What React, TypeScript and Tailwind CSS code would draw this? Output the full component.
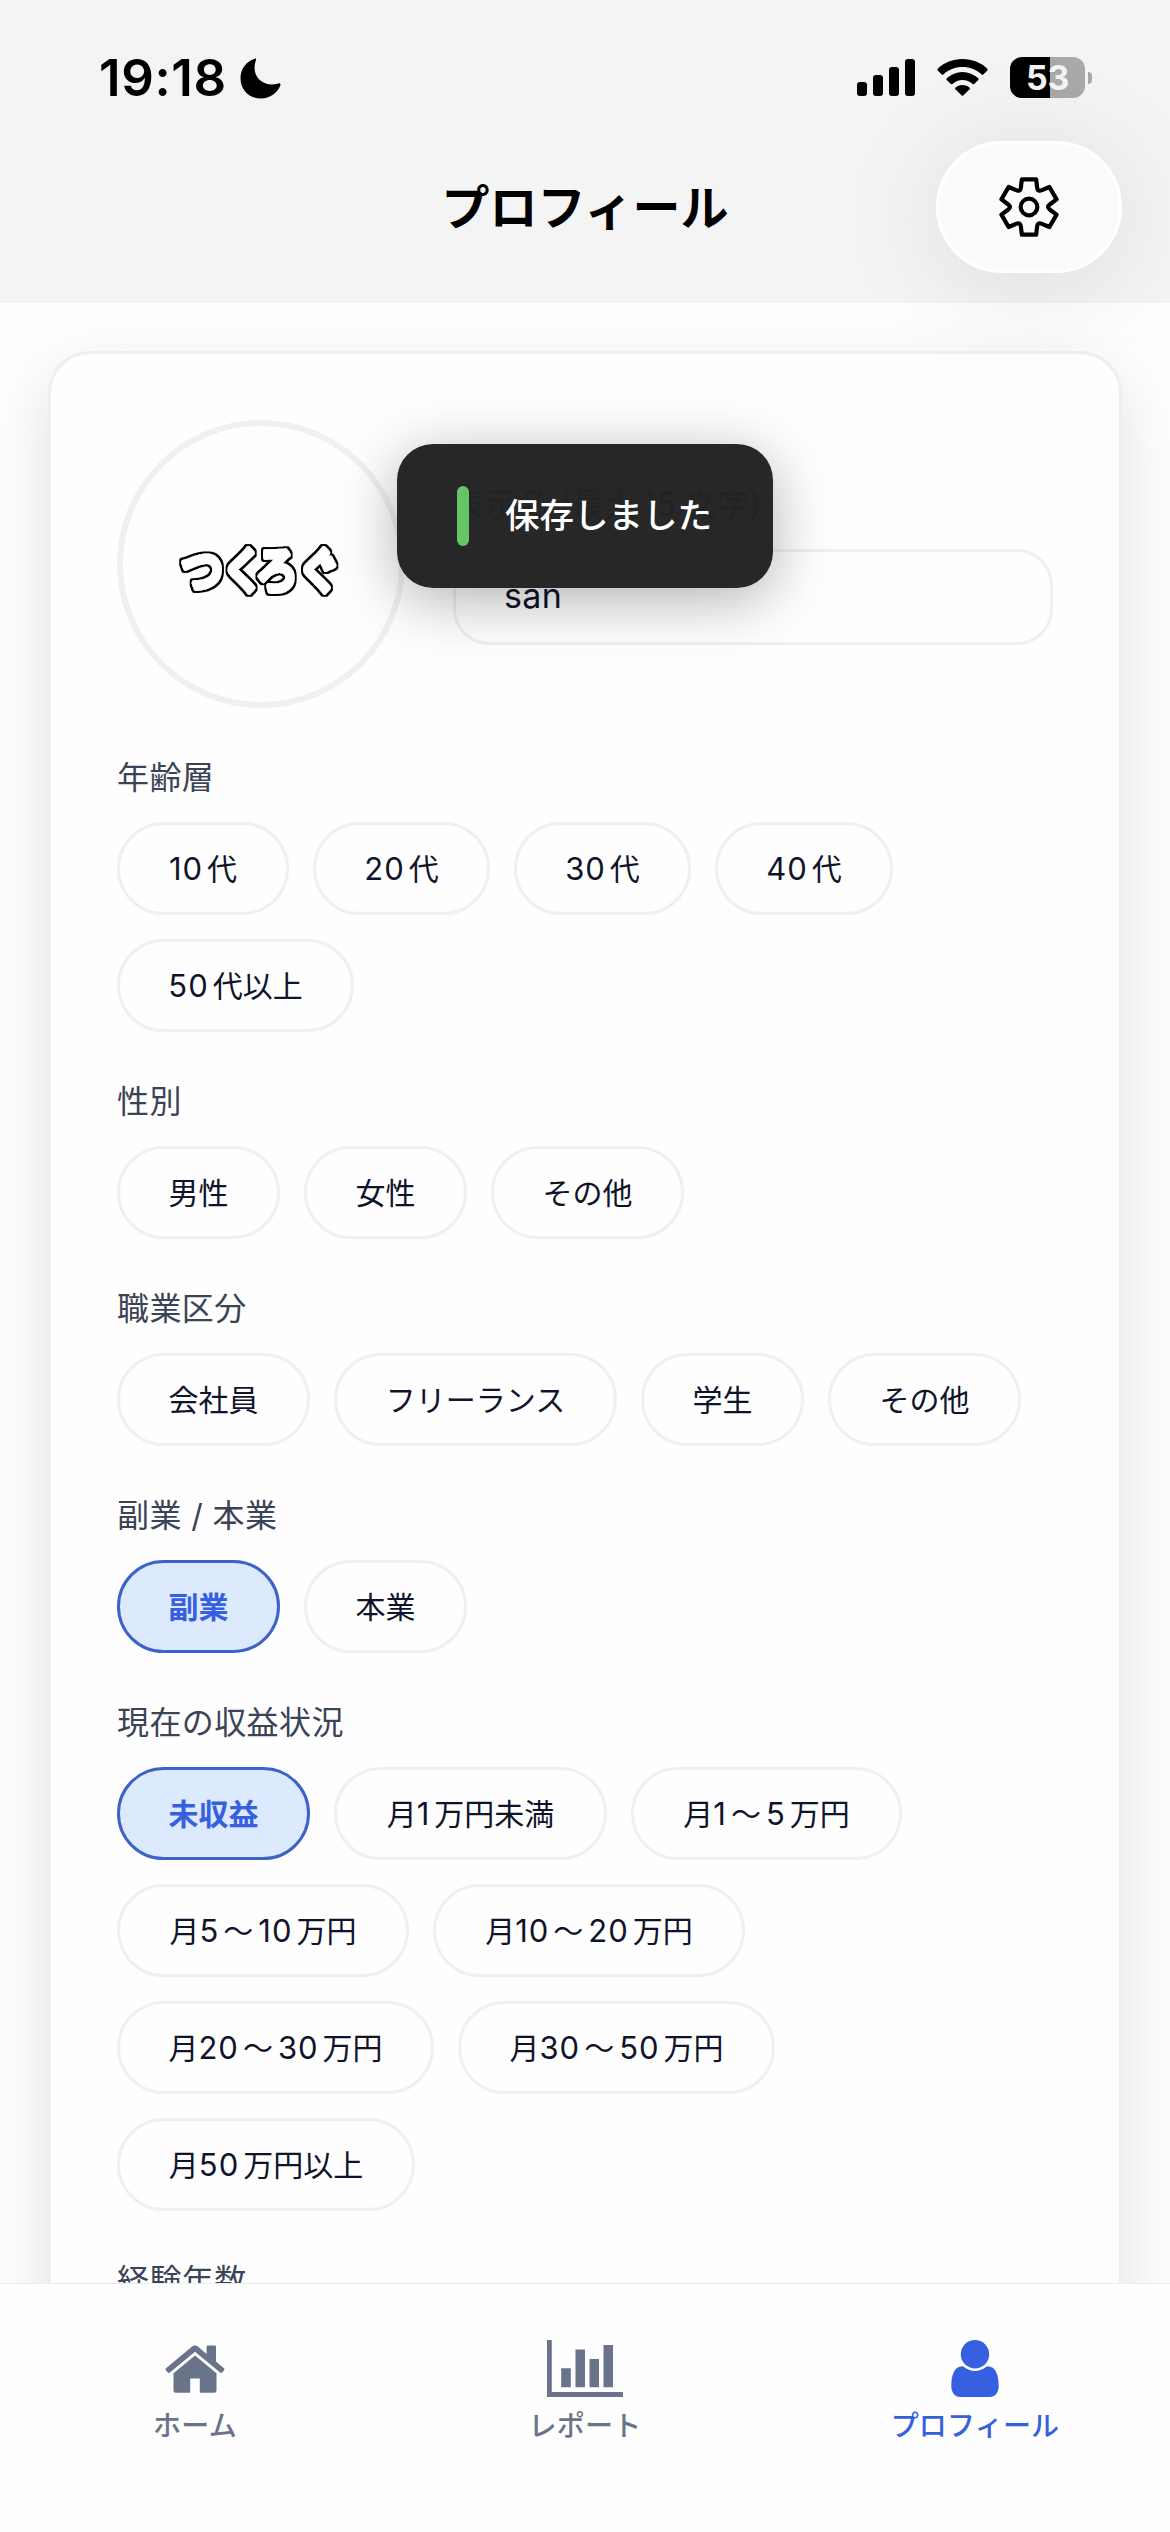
import React from "react";

type Option = { text: string; width: string; selected?: boolean };

function Mixed({ text }: { text: string }) {
  const parts = text.split(/(\d+)/).filter(Boolean);
  return (
    <span className="flex items-center whitespace-nowrap">
      {parts.map((p, i) =>
        /\d/.test(p) ? (
          <span key={i} className={`mr-1 text-[31px] tracking-[1px] ${parts[i - 1] === "〜" ? "ml-[5px]" : ""}`}>
            {p}
          </span>
        ) : (
          <span key={i}>{p}</span>
        ),
      )}
    </span>
  );
}

function Pill({ o }: { o: Option }) {
  return (
    <button
      className={`flex h-[93px] shrink-0 items-center justify-center rounded-full border-[3px] text-[30px] leading-none ${o.width} ${
        o.selected
          ? "border-[#3d63c9] bg-[#dde9fd] font-bold text-[#3660e0]"
          : "border-[#f0f0f1] text-[#10142a]"
      }`}
    >
      <Mixed text={o.text} />
    </button>
  );
}

function Section({ title, rows }: { title: string; rows: Option[][] }) {
  return (
    <section className="flex flex-col">
      <h2 className="h-12 text-[32px] leading-[49px] tracking-[0.4px] text-[#3b4456]">{title}</h2>
      <div className="mt-[21px] flex flex-col gap-6">
        {rows.map((row, i) => (
          <div key={i} className="flex gap-6">
            {row.map((o) => (
              <Pill key={o.text} o={o} />
            ))}
          </div>
        ))}
      </div>
    </section>
  );
}

const sections: { title: string; rows: Option[][] }[] = [
  {
    title: "年齢層",
    rows: [
      [
        { text: "10代", width: "w-[172px]" },
        { text: "20代", width: "w-[177px]" },
        { text: "30代", width: "w-[177px]" },
        { text: "40代", width: "w-[178px]" },
      ],
      [{ text: "50代以上", width: "w-[237px]" }],
    ],
  },
  {
    title: "性別",
    rows: [
      [
        { text: "男性", width: "w-[163px]" },
        { text: "女性", width: "w-[163px]" },
        { text: "その他", width: "w-[193px]" },
      ],
    ],
  },
  {
    title: "職業区分",
    rows: [
      [
        { text: "会社員", width: "w-[193px]" },
        { text: "フリーランス", width: "w-[283px]" },
        { text: "学生", width: "w-[163px]" },
        { text: "その他", width: "w-[193px]" },
      ],
    ],
  },
  {
    title: "副業 / 本業",
    rows: [
      [
        { text: "副業", width: "w-[163px]", selected: true },
        { text: "本業", width: "w-[163px]" },
      ],
    ],
  },
  {
    title: "現在の収益状況",
    rows: [
      [
        { text: "未収益", width: "w-[193px]", selected: true },
        { text: "月1万円未満", width: "w-[273px]" },
        { text: "月1〜5万円", width: "w-[271px]" },
      ],
      [
        { text: "月5〜10万円", width: "w-[292px]" },
        { text: "月10〜20万円", width: "w-[312px]" },
      ],
      [
        { text: "月20〜30万円", width: "w-[317px]" },
        { text: "月30〜50万円", width: "w-[317px]" },
      ],
      [{ text: "月50万円以上", width: "w-[298px]" }],
    ],
  },
  { title: "経験年数", rows: [] },
];

function GearIcon() {
  const teeth = [0, 60, 120, 180, 240, 300];
  const pt = (r: number, deg: number) => {
    const a = ((deg - 90) * Math.PI) / 180;
    return `${(r * Math.cos(a)).toFixed(2)} ${(r * Math.sin(a)).toFixed(2)}`;
  };
  const d =
    teeth
      .map((t, i) => `${i ? "L" : "M"}${pt(28.6, t - 14.500)} L${pt(28.6, t + 14.500)} L${pt(21.2, t + 22.5)} Q${pt(17.2, t + 30)} ${pt(21.2, t + 37.5)}`)
      .join(" ") + "Z";
  return (
    <svg className="h-16 w-16" viewBox="-32 -32 64 64" fill="none" stroke="#000" strokeWidth="4.2" strokeLinejoin="round">
      <path d={d} />
      <circle r="8.300" />
    </svg>
  );
}

function StatusBar() {
  return (
    <div className="flex h-[156px] items-start justify-between pl-[99px] pr-[78px] pt-[50px]">
      <div className="flex items-center gap-[13px]">
        <span className="font-['Inter',sans-serif] text-[51px] font-semibold leading-[56px] tracking-[0.6px]">19:18</span>
        <svg className="h-[41px] w-[41px]" viewBox="0 0 41 41">
          <path d="M15.500 0.500C6 3.500 0.500 11 0.500 20C0.500 32 9 40.500 21 40.500C30 40.500 37.500 35 40.500 27C40.500 25.500 39.500 25 38.500 25.500C24 30 10 19 16 2C16.200 1 16 0.400 15.500 0.500Z" />
        </svg>
      </div>
      <div className="flex items-center pt-[7px]">
        <div className="flex h-[37px] items-end gap-1.5">
          <i className="h-3.5 w-2.5 rounded-[3px] bg-black" />
          <i className="h-[21px] w-2.5 rounded-[3px] bg-black" />
          <i className="h-[29px] w-2.5 rounded-[3px] bg-black" />
          <i className="h-[37px] w-2.5 rounded-[3px] bg-black" />
        </div>
        <svg className="ml-[22px] h-[37px] w-[51px]" viewBox="0 0 51 37">
          <path d="M25.500 0C16 0 7 3.500 0.700 9.800Q0 10.800 0.700 11.600L4.700 15.500Q5.500 16.200 6.300 15.500C11.500 10.500 18.300 8 25.500 8S39.500 10.500 44.700 15.500Q45.500 16.200 46.300 15.500L50.300 11.600Q51 10.800 50.300 9.800C44 3.500 35 0 25.500 0Z" />
          <path d="M25.500 13C19.500 13 14 15.300 9.700 19.300Q9 20.200 9.700 21L13.800 25Q14.600 25.700 15.400 25C18.200 22.500 21.700 21 25.500 21S32.800 22.500 35.600 25Q36.400 25.700 37.200 25L41.300 21Q42 20.200 41.300 19.300C37 15.300 31.500 13 25.500 13Z" />
          <path d="M25.500 26C22.800 26 20.300 27 18.400 28.700Q17.800 29.500 18.400 30.200L24.800 36.400Q25.500 37 26.200 36.400L32.600 30.200Q33.200 29.500 32.600 28.700C30.700 27 28.200 26 25.500 26Z" />
        </svg>
        <div className="ml-[22px] flex h-[41px] w-[75px] items-center justify-center rounded-[12px] bg-[linear-gradient(90deg,#000_53%,#a9a9a9_53%)]">
          <span className="font-['Inter',sans-serif] text-[34px] font-bold leading-none tracking-[-0.3px] text-[#f4f4f4]">53</span>
        </div>
        <i className="ml-[3px] h-3 w-1 rounded-r-full bg-[#a9a9a9]" />
      </div>
    </div>
  );
}

function HomeIcon() {
  return (
    <svg className="h-12 w-[60px]" viewBox="0 0 60 48" fill="#69748a">
      <path d="M30 0.500Q28.200 0.500 26.800 1.700L1 23.200Q0 24.200 0.900 25.300L2.800 27.500Q3.800 28.400 4.900 27.600L30 6.800L55.100 27.600Q56.200 28.400 57.200 27.500L59.100 25.300Q60 24.200 59 23.200L51 16.500V1.700Q51 0.500 49.800 0.500H42.800Q41.600 0.500 41.600 1.700V8.900L33.200 1.700Q31.800 0.500 30 0.500Z" />
      <path d="M30 10.500L8.500 28.200V45.500Q8.500 47.800 10.800 47.800H25.200V33.500H34.800V47.800H49.200Q51.500 47.800 51.500 45.500V28.200Z" />
    </svg>
  );
}

function ChartIcon() {
  return (
    <svg className="h-[57px] w-[76px]" viewBox="0 0 76 57" fill="#69748a">
      <path d="M0 0H4.800V52H76V57H0Z" />
      <path d="M14.200 28.300H23.800V47.200H14.200ZM28.500 9.500H38V47.200H28.500ZM42.500 19H52V47.200H42.500ZM56.500 5H66V47.200H56.500Z" />
    </svg>
  );
}

function UserIcon() {
  return (
    <svg className="h-[57px] w-12" viewBox="0 0 48 57" fill="#3660e0">
      <circle cx="24" cy="14.200" r="14.200" />
      <path d="M11.500 26.200C3 26.200 0.300 35.500 0.300 46C0.300 52.500 4 57 9 57H39C44 57 47.700 52.500 47.700 46C47.700 35.500 45 26.200 36.500 26.200C35.500 26.200 30.500 31 24 31S12.500 26.200 11.500 26.200Z" />
    </svg>
  );
}

function Logo() {
  return (
    <svg
      className="h-[66px] w-[176px] overflow-visible font-['Noto_Sans_CJK_JP',sans-serif]"
      viewBox="0 0 176 66"
    >
      <filter id="outline" x="-10%" y="-20%" width="120%" height="140%">
        <feMorphology in="SourceAlpha" operator="dilate" radius="2" result="fat" />
        <feFlood floodColor="#000" />
        <feComposite in2="fat" operator="in" result="ink" />
        <feMerge>
          <feMergeNode in="ink" />
          <feMergeNode in="SourceGraphic" />
        </feMerge>
      </filter>
      <g
        fill="#fff"
        stroke="#fff"
        strokeWidth="5"
        strokeLinejoin="round"
        fontWeight="500"
        fontSize="42"
        transform="translate(0 50) scale(1 1.15)"
      >
        <text x="8 49 83 125" y="0" filter="url(#outline)">
          つくろぐ
        </text>
      </g>
    </svg>
  );
}

export default function App() {
  return (
    <div
      lang="ja"
      className="relative flex h-[2532px] w-[1170px] flex-col overflow-hidden bg-[#fefefe] font-['Inter','Noto_Sans_CJK_JP',sans-serif] text-black"
    >
      <header className="relative z-10 h-[303px] shrink-0 bg-[#f4f4f4]">
        <StatusBar />
        <h1 className="pt-[24px] text-center text-[48px] font-bold leading-[56px]">プロフィール</h1>
        <button className="absolute left-[936px] top-[141px] flex h-[132px] w-[186px] items-center justify-center rounded-full border-[3px] border-white bg-[#fbfbfb] shadow-[0_12px_110px_rgba(0,0,0,0.1)]">
          <GearIcon />
        </button>
      </header>

      <main className="min-h-0 flex-1 overflow-hidden px-12 pt-12">
        <div className="h-[2200px] rounded-[42px] border-[3px] border-[#efeff0] bg-[#fefefe] p-[66px] shadow-[0_24px_66px_rgba(0,0,0,0.12)]">
          <div className="flex gap-12">
            <div className="flex h-72 w-72 shrink-0 items-center justify-center rounded-full border-[6px] border-[#f0f0f1] pt-[14px]">
              <Logo />
            </div>
            <div className="flex flex-1 flex-col pt-[60px]">
              <label className="h-12 whitespace-nowrap text-[32px] leading-[49px] tracking-[0.5px] text-[#3b4456]">
                表示名 (最大<span className="ml-1.5 mr-2">15</span>文字)
              </label>
              <div className="mt-[21px] flex h-24 items-center rounded-[36px] border-[3px] border-[#f0f0f1] px-12 pb-1 text-[34px] tracking-[0.3px] text-[#10142a]">
                san
              </div>
            </div>
          </div>
          <div className="mt-[45px] flex flex-col gap-[45px]">
            {sections.map((s) => (
              <Section key={s.title} {...s} />
            ))}
          </div>
        </div>
      </main>

      <nav className="z-10 grid h-[249px] shrink-0 grid-cols-3 border-t border-[#ececee] bg-[#fefefe] text-[28px] font-medium tracking-[0.2px] text-[#69748a]">
        <a className="flex flex-col items-center pt-[56px]">
          <span className="flex h-[57px] items-center">
            <HomeIcon />
          </span>
          <span className="mt-[11px] leading-[36px]">ホーム</span>
        </a>
        <a className="flex flex-col items-center pt-[56px]">
          <ChartIcon />
          <span className="mt-[11px] leading-[36px]">レポート</span>
        </a>
        <a className="flex flex-col items-center pt-[56px] text-[#3660e0]">
          <UserIcon />
          <span className="mt-[11px] leading-[36px]">プロフィール</span>
        </a>
      </nav>

      <div className="absolute left-[397px] top-[444px] z-20 flex h-36 w-[376px] items-center rounded-[36px] bg-[#222222]/[0.975] pl-[60px] shadow-[0_12px_60px_rgba(0,0,0,0.3)]">
        <i className="h-[60px] w-3 rounded-full bg-[#65c466]" />
        <span className="ml-9 text-[34.5px] font-medium leading-[48px] text-white">保存しました</span>
      </div>
    </div>
  );
}
